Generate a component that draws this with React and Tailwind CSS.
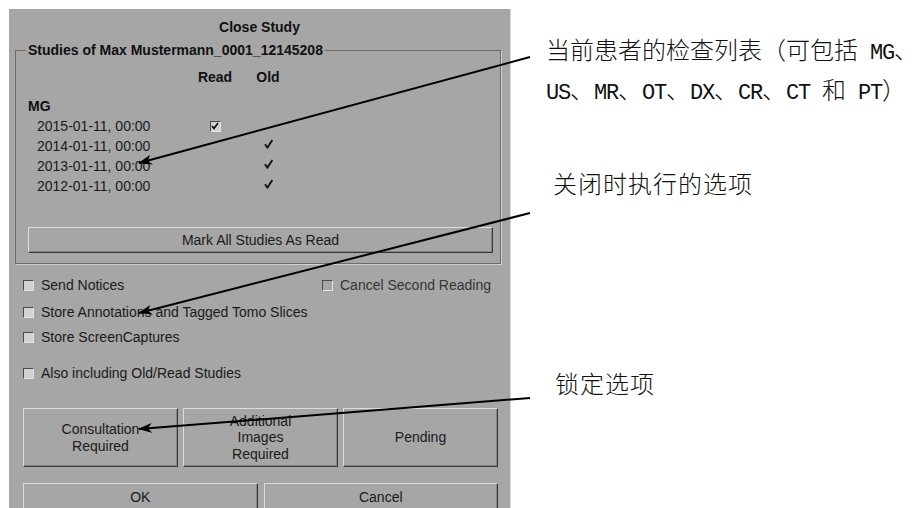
import React from 'react';

const studies = [
  { date: '2015-01-11, 00:00', read: true, old: false },
  { date: '2014-01-11, 00:00', read: false, old: true },
  { date: '2013-01-11, 00:00', read: false, old: true },
  { date: '2012-01-11, 00:00', read: false, old: true },
];

function Tick({ className = '' }) {
  return (
    <svg width="9" height="10" viewBox="0 0 9 10" className={className}>
      <path d="M1 5.2 L3.4 8.6 L8.4 1" fill="none" stroke="#111" strokeWidth="1.8" strokeLinejoin="miter" />
    </svg>
  );
}

function Box({ checked, disabled }) {
  return (
    <span
      className={`inline-flex items-center justify-center w-[11px] h-[11px] shrink-0 border border-t-[#4a4a4a] border-l-[#4a4a4a] border-b-[#e4e4e4] border-r-[#e4e4e4] ${
        disabled ? 'bg-[#a6a6a6]' : 'bg-[#d2d2d2]'
      }`}
    >
      {checked && (
        <svg width="8" height="8" viewBox="0 0 8 8">
          <path d="M1 4 L3 6.5 L7 1" fill="none" stroke="#000" strokeWidth="1.6" />
        </svg>
      )}
    </span>
  );
}

function Option({ label, disabled, className = '' }) {
  return (
    <div className={`flex items-center h-[18px] gap-[7px] ${className}`}>
      <Box disabled={disabled} />
      <span className={disabled ? 'text-[#353535]' : ''}>{label}</span>
    </div>
  );
}

function Btn({ children, className = '' }) {
  return (
    <button
      type="button"
      className={`flex items-center justify-center text-center bg-[#a6a6a6] border border-t-[#dcdcdc] border-l-[#dcdcdc] border-b-[#383838] border-r-[#383838] shadow-[inset_-1px_-1px_0_#858585] ${className}`}
    >
      {children}
    </button>
  );
}

// latin part of the annotations, narrow like the half-width glyphs of the original
function L({ children }) {
  return <span className="font-['Liberation_Mono',monospace] text-[22px] tracking-[-1.2px]">{children}</span>;
}

export default function App() {
  return (
    <div className="relative w-[921px] h-[508px] overflow-hidden bg-white flex">
      {/* Dialog */}
      <div className="mt-[9px] ml-[9px] w-[502px] h-[499px] shrink-0 bg-[#a6a6a6] border-r border-[#d8d8d8] flex flex-col text-[14px] text-[#1a1a1a] font-['Liberation_Sans',Arial,sans-serif]">
        <div className="mt-[9px] h-[18px] leading-[18px] text-center font-bold text-[#111]">Close Study</div>

        <fieldset className="mt-[5px] ml-[6px] w-[486px] border border-[#6c6c6c] shadow-[1px_1px_0_#d2d2d2] pb-[10px]">
          <legend className="ml-[10px] px-[2px] h-[18px] leading-[18px] font-bold text-[#111]">
            Studies of Max Mustermann_0001_12145208
          </legend>

          <div className="mt-[9px] flex h-[18px] leading-[18px] font-bold text-[#111]">
            <div className="w-[179px]" />
            <div className="w-[40px] text-center">Read</div>
            <div className="ml-[13px] w-[40px] text-center">Old</div>
          </div>

          <div className="mt-[11px] ml-[12px] h-[18px] leading-[18px] font-bold text-[#111]">MG</div>

          <div className="mt-px flex flex-col">
            {studies.map((s) => (
              <div key={s.date} className="flex items-center h-[20px]">
                <div className="w-[179px] pl-[21px]">{s.date}</div>
                <div className="w-[40px] flex justify-center">{s.read && <Box checked />}</div>
                <div className="ml-[13px] w-[40px] flex justify-center">{s.old && <Tick className="-mt-[5px]" />}</div>
              </div>
            ))}
          </div>

          <Btn className="mt-[31px] ml-[12px] w-[465px] h-[26px]">Mark All Studies As Read</Btn>
        </fieldset>

        <div className="ml-[14px] flex flex-col">
          <div className="mt-[12px] flex items-center">
            <Option label="Send Notices" className="w-[299px]" />
            <Option label="Cancel Second Reading" disabled />
          </div>
          <Option label="Store Annotations and Tagged Tomo Slices" className="mt-[9px]" />
          <Option label="Store ScreenCaptures" className="mt-[7px]" />
          <Option label="Also including Old/Read Studies" className="mt-[18px]" />

          <div className="mt-[26px] w-[475px] grid grid-cols-3 gap-[5px] leading-[16.5px]">
            <Btn className="h-[59px]">Consultation<br />Required</Btn>
            <Btn className="h-[59px]">Additional<br />Images<br />Required</Btn>
            <Btn className="h-[59px]">Pending</Btn>
          </div>

          <div className="mt-[16px] w-[475px] grid grid-cols-2 gap-[6px]">
            <Btn className="h-[28px]">OK</Btn>
            <Btn className="h-[28px]">Cancel</Btn>
          </div>
        </div>
      </div>

      {/* Annotations */}
      <div className="pl-[35px] flex flex-col text-[24px] leading-[35px] font-light text-[#111] font-['Noto_Sans_CJK_SC',sans-serif]">
        <div className="mt-[31px] whitespace-nowrap">
          当前患者的检查列表（可包括<L> MG</L>、
        </div>
        <div className="whitespace-nowrap">
          <L>US</L>、<L>MR</L>、<L>OT</L>、<L>DX</L>、<L>CR</L>、<L>CT </L>和<L> PT</L>）
        </div>
        <div className="mt-[54px] ml-[7px] tracking-[1px] whitespace-nowrap">关闭时执行的选项</div>
        <div className="mt-[165px] ml-[9px] tracking-[1px] whitespace-nowrap">锁定选项</div>
      </div>

      {/* Pointer arrows */}
      <svg className="absolute inset-0 pointer-events-none" width="921" height="508" viewBox="0 0 921 508">
        <defs>
          <marker id="ah" viewBox="0 0 14 10" refX="13" refY="5" markerWidth="14" markerHeight="10" markerUnits="userSpaceOnUse" orient="auto">
            <path d="M0 0 L14 5 L0 10 L4 5 Z" fill="#000" />
          </marker>
        </defs>
        <line x1="530" y1="57" x2="139" y2="163" stroke="#000" strokeWidth="2" markerEnd="url(#ah)" />
        <line x1="530" y1="213" x2="139" y2="313" stroke="#000" strokeWidth="2" markerEnd="url(#ah)" />
        <line x1="530" y1="398" x2="139" y2="429" stroke="#000" strokeWidth="2" markerEnd="url(#ah)" />
      </svg>
    </div>
  );
}
